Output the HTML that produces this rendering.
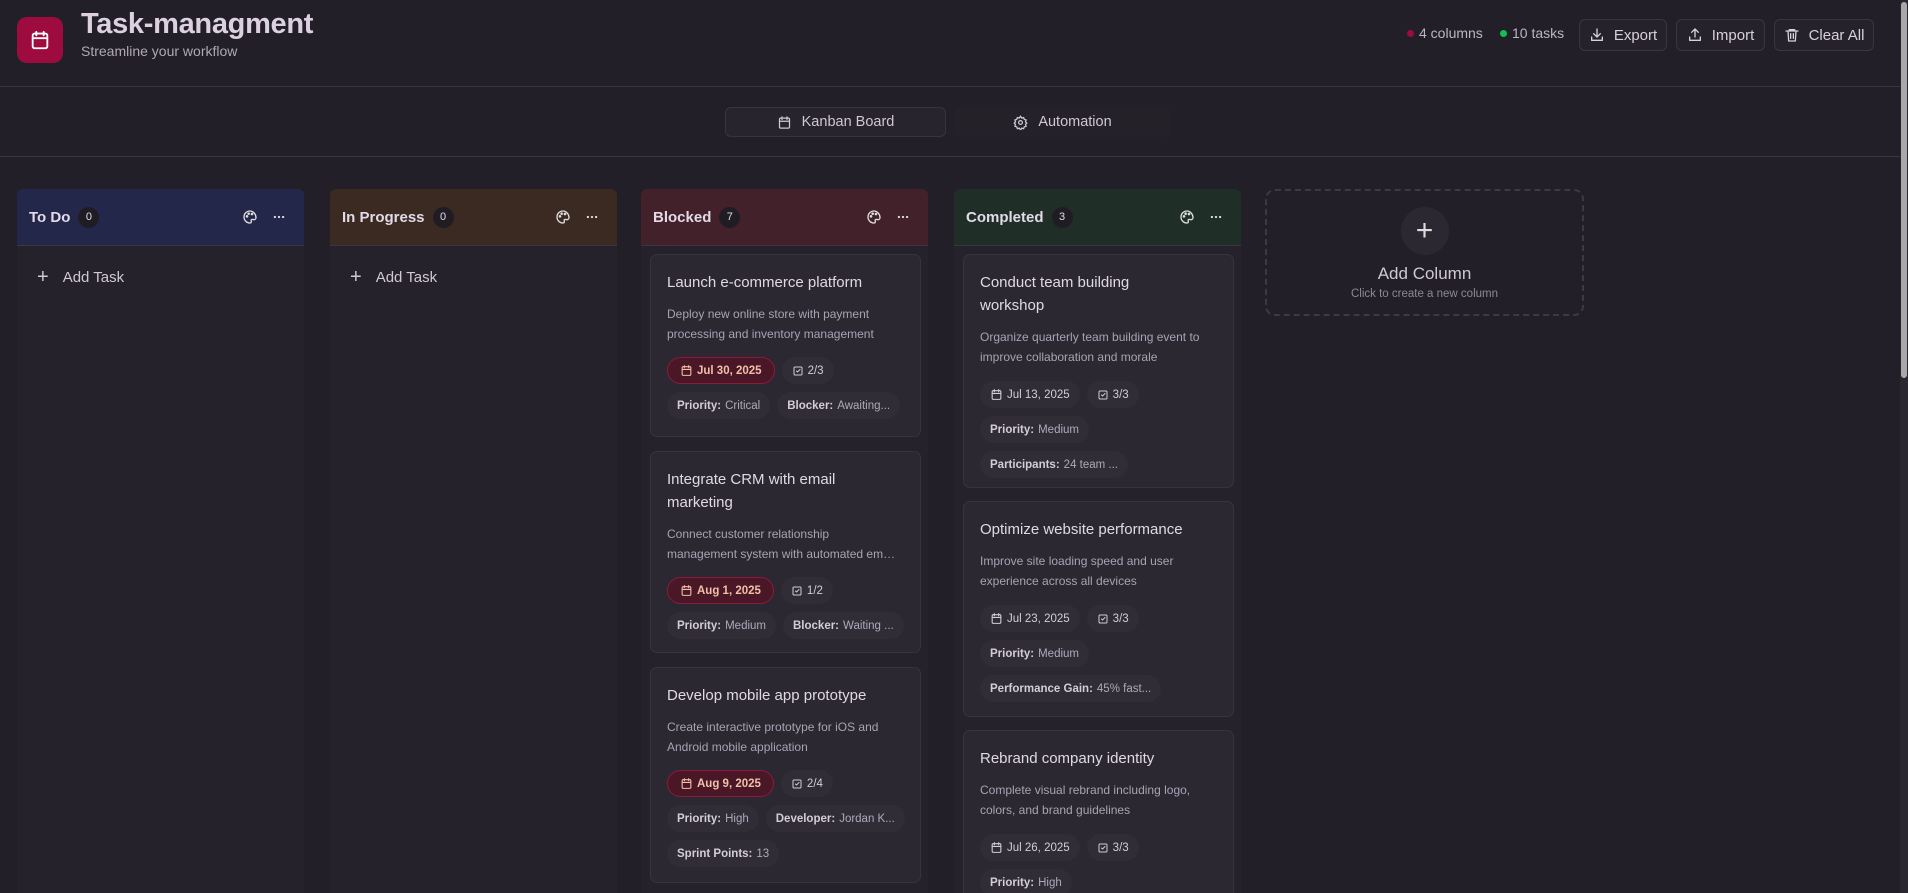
<!DOCTYPE html>
<html style="width:1908px;height:893px;overflow:hidden"><head><meta charset="utf-8">
<style>
*{box-sizing:border-box;margin:0;padding:0}
body{width:1908px;height:893px;overflow:hidden;background:#221f28;font-family:"Liberation Sans",sans-serif;color:#ddd5e3;position:relative}
.abs{position:absolute}
.hdr{left:0;top:0;width:1900px;height:87px;border-bottom:1px solid #3a3540}
.logo{left:17px;top:17px;width:46px;height:46px;border-radius:10px;background:#9e0b3e;display:flex;align-items:center;justify-content:center}
.title{left:81px;top:8px;font-size:29px;font-weight:bold;color:#ddd0e0;letter-spacing:-0.3px}
.sub{left:81px;top:43px;font-size:14px;color:#b0a8b8}
.stat{top:25px;font-size:14px;color:#bdb5c5;display:flex;align-items:center;gap:5px}
.dot{width:7px;height:7px;border-radius:50%}
.btn{top:19px;height:32px;border:1px solid #3a3640;border-radius:6px;background:#25222b;display:flex;align-items:center;justify-content:center;gap:9px;font-size:15px;color:#d8d0de}
.nav{left:0;top:87px;width:1900px;height:70px;border-bottom:1px solid #3a3540}
.tab{top:107px;height:30px;border-radius:6px;display:flex;align-items:center;justify-content:center;gap:10px;font-size:14.5px;color:#cfc7d6}
.col{top:189px;width:287px;height:704px;background:#25222b;border-radius:6px 6px 0 0;overflow:hidden}
.ch{height:57px;border-radius:6px 6px 0 0;border-bottom:1px solid #3a3540;display:flex;align-items:center;padding:0 12px;font-size:15px;font-weight:bold;color:#e2dae8}
.badge{width:21px;height:21px;border-radius:50%;background:#1f1c24;font-size:11px;font-weight:normal;display:flex;align-items:center;justify-content:center;margin-left:8px}
.ic{margin-left:auto;display:flex;gap:14px;align-items:center;margin-right:6px}
.add{display:flex;align-items:center;gap:14px;padding:20px 20px;font-size:15px;color:#d0c8d6}
.card{width:271px;background:#2b2832;border:1px solid #38343f;border-radius:7px;padding:16px;overflow:hidden}
.ct{font-size:15px;line-height:23px;color:#e0d8e6;margin-bottom:11px;white-space:nowrap}
.cd{font-size:12px;line-height:19.5px;color:#aaa2b4;white-space:nowrap}
.pills{display:flex;flex-direction:column;gap:8px;margin-top:13px}
.row{display:flex;gap:7px}
.pill{height:27px;border-radius:14px;background:#302d37;display:flex;align-items:center;gap:4px;padding:0 10px;font-size:11.5px;color:#d4ccda;white-space:nowrap}
.pill b{font-weight:bold}
.pill span{color:#b0a8ba}
.red{background:#4a1727;border:1px solid #8c1a3e;color:#f2c0a8;font-weight:bold;padding:0 12px}
.addcol{left:1265px;top:189px;width:319px;height:127px;border:2px dashed #3e3944;border-radius:10px;text-align:center}
.sb{left:1900px;top:0;width:8px;height:893px;background:#2a2730}
.thumb{left:1901px;top:2px;width:6px;height:376px;background:#a8a8a8;border-radius:3px}
</style></head><body>
<svg width="0" height="0" style="position:absolute"><defs>
<symbol id="cal" viewBox="0 0 24 24"><g fill="none" stroke="currentColor" stroke-width="2" stroke-linecap="round"><rect x="4" y="5" width="16" height="16" rx="2"/><path d="M8 3v4M16 3v4M4 10h16"/></g></symbol>
<symbol id="chk" viewBox="0 0 24 24"><g fill="none" stroke="currentColor" stroke-width="2" stroke-linecap="round" stroke-linejoin="round"><rect x="4" y="4" width="16" height="16" rx="2"/><path d="M9 12l2 2 5-5"/></g></symbol>
<symbol id="pal" viewBox="0 0 24 24"><g fill="none" stroke="currentColor" stroke-width="2"><path d="M12 3a9 9 0 100 18c1.5 0 2-1 2-2 0-1.5-1-2 0-3s3 0 4 0a3 3 0 003-3c0-5-4-10-9-10z"/><circle cx="7.5" cy="11" r="1"/><circle cx="10" cy="7" r="1"/><circle cx="15" cy="7.5" r="1"/></g></symbol>
<symbol id="dots" viewBox="0 0 24 24"><g fill="currentColor"><circle cx="5" cy="12" r="2"/><circle cx="12" cy="12" r="2"/><circle cx="19" cy="12" r="2"/></g></symbol>
</defs></svg>
<div class="abs hdr"></div>
<div class="abs logo"><svg width="22" height="22" style="color:#fff"><use href="#cal"/></svg></div>
<div class="abs title">Task-managment</div>
<div class="abs sub">Streamline your workflow</div>
<div class="abs stat" style="left:1407px"><div class="dot" style="background:#9e0b3e"></div>4 columns</div>
<div class="abs stat" style="left:1500px"><div class="dot" style="background:#10c050"></div>10 tasks</div>
<div class="abs btn" style="left:1579px;width:88px"><svg width="16" height="16" viewBox="0 0 24 24" fill="none" stroke="#d8d0de" stroke-width="2" stroke-linecap="round" stroke-linejoin="round"><path d="M12 3v12M7 10l5 5 5-5M4 15v5h16v-5"/></svg>Export</div>
<div class="abs btn" style="left:1676px;width:89px"><svg width="16" height="16" viewBox="0 0 24 24" fill="none" stroke="#d8d0de" stroke-width="2" stroke-linecap="round" stroke-linejoin="round"><path d="M12 15V3M7 8l5-5 5 5M4 15v5h16v-5"/></svg>Import</div>
<div class="abs btn" style="left:1774px;width:100px"><svg width="16" height="16" viewBox="0 0 24 24" fill="none" stroke="#d8d0de" stroke-width="2" stroke-linecap="round" stroke-linejoin="round"><path d="M3 6h18M8 6V4h8v2M6 6l1 15h10l1-15M10 10v7M14 10v7"/></svg>Clear All</div>
<div class="abs nav"></div>
<div class="abs tab" style="left:725px;width:221px;background:#27242d;border:1px solid #38343e"><svg width="15" height="15" style="color:#cfc7d6"><use href="#cal"/></svg>Kanban Board</div>
<div class="abs tab" style="left:955px;width:215px;background:#242129"><svg width="15" height="15" viewBox="0 0 24 24" fill="none" stroke="#cfc7d6" stroke-width="2"><circle cx="12" cy="12" r="3"/><path d="M12 2l2 3 3-1 1 3 3 1-1 3 2 2-2 2 1 3-3 1-1 3-3-1-2 3-2-3-3 1-1-3-3-1 1-3-2-2 2-2-1-3 3-1 1-3 3 1z"/></svg>Automation</div>

<div class="abs col" style="left:17px"><div class="ch" style="background:#23284a">To Do<div class="badge">0</div><div class="ic"><svg width="16" height="16" style="color:#ddd"><use href="#pal"/></svg><svg width="14" height="14" style="color:#ddd"><use href="#dots"/></svg></div></div><div class="add"><span style="font-size:20px;font-weight:300">+</span>Add Task</div></div>
<div class="abs col" style="left:330px"><div class="ch" style="background:#3b2a22">In Progress<div class="badge">0</div><div class="ic"><svg width="16" height="16" style="color:#ddd"><use href="#pal"/></svg><svg width="14" height="14" style="color:#ddd"><use href="#dots"/></svg></div></div><div class="add"><span style="font-size:20px;font-weight:300">+</span>Add Task</div></div>
<div class="abs col" style="left:641px"><div class="ch" style="background:#42212a">Blocked<div class="badge">7</div><div class="ic"><svg width="16" height="16" style="color:#ddd"><use href="#pal"/></svg><svg width="14" height="14" style="color:#ddd"><use href="#dots"/></svg></div></div></div>
<div class="abs col" style="left:954px"><div class="ch" style="background:#1f2f28">Completed<div class="badge">3</div><div class="ic"><svg width="16" height="16" style="color:#ddd"><use href="#pal"/></svg><svg width="14" height="14" style="color:#ddd"><use href="#dots"/></svg></div></div></div>

<div class="abs card" style="left:650px;top:254px;height:183px"><div class="ct">Launch e-commerce platform</div><div class="cd">Deploy new online store with payment<br>processing and inventory management</div>
<div class="pills"><div class="row"><div class="pill red"><svg width="13" height="13"><use href="#cal"/></svg>Jul 30, 2025</div><div class="pill"><svg width="12" height="12"><use href="#chk"/></svg>2/3</div></div><div class="row"><div class="pill"><b>Priority:</b><span>Critical</span></div><div class="pill"><b>Blocker:</b><span>Awaiting...</span></div></div></div></div>
<div class="abs card" style="left:650px;top:451px;height:202px"><div class="ct">Integrate CRM with email<br>marketing</div><div class="cd">Connect customer relationship<br>management system with automated em…</div>
<div class="pills"><div class="row"><div class="pill red"><svg width="13" height="13"><use href="#cal"/></svg>Aug 1, 2025</div><div class="pill"><svg width="12" height="12"><use href="#chk"/></svg>1/2</div></div><div class="row"><div class="pill"><b>Priority:</b><span>Medium</span></div><div class="pill"><b>Blocker:</b><span>Waiting ...</span></div></div></div></div>
<div class="abs card" style="left:650px;top:667px;height:216px"><div class="ct">Develop mobile app prototype</div><div class="cd">Create interactive prototype for iOS and<br>Android mobile application</div>
<div class="pills"><div class="row"><div class="pill red"><svg width="13" height="13"><use href="#cal"/></svg>Aug 9, 2025</div><div class="pill"><svg width="12" height="12"><use href="#chk"/></svg>2/4</div></div><div class="row"><div class="pill"><b>Priority:</b><span>High</span></div><div class="pill"><b>Developer:</b><span>Jordan K...</span></div></div><div class="row"><div class="pill"><b>Sprint Points:</b><span>13</span></div></div></div></div>

<div class="abs card" style="left:963px;top:254px;height:234px"><div class="ct">Conduct team building<br>workshop</div><div class="cd">Organize quarterly team building event to<br>improve collaboration and morale</div>
<div class="pills" style="margin-top:14px"><div class="row"><div class="pill"><svg width="13" height="13"><use href="#cal"/></svg>Jul 13, 2025</div><div class="pill"><svg width="12" height="12"><use href="#chk"/></svg>3/3</div></div><div class="row"><div class="pill"><b>Priority:</b><span>Medium</span></div></div><div class="row"><div class="pill"><b>Participants:</b><span>24 team ...</span></div></div></div></div>
<div class="abs card" style="left:963px;top:501px;height:216px"><div class="ct">Optimize website performance</div><div class="cd">Improve site loading speed and user<br>experience across all devices</div>
<div class="pills" style="margin-top:14px"><div class="row"><div class="pill"><svg width="13" height="13"><use href="#cal"/></svg>Jul 23, 2025</div><div class="pill"><svg width="12" height="12"><use href="#chk"/></svg>3/3</div></div><div class="row"><div class="pill"><b>Priority:</b><span>Medium</span></div></div><div class="row"><div class="pill"><b>Performance Gain:</b><span>45% fast...</span></div></div></div></div>
<div class="abs card" style="left:963px;top:730px;height:200px"><div class="ct">Rebrand company identity</div><div class="cd">Complete visual rebrand including logo,<br>colors, and brand guidelines</div>
<div class="pills" style="margin-top:14px"><div class="row"><div class="pill"><svg width="13" height="13"><use href="#cal"/></svg>Jul 26, 2025</div><div class="pill"><svg width="12" height="12"><use href="#chk"/></svg>3/3</div></div><div class="row"><div class="pill"><b>Priority:</b><span>High</span></div></div></div></div>

<div class="abs addcol"><div style="width:48px;height:48px;border-radius:50%;background:#2b2832;margin:16px auto 0;display:flex;align-items:center;justify-content:center;font-size:30px;font-weight:300;color:#ddd">+</div>
<div style="font-size:17px;color:#d0c8d8;margin-top:9px">Add Column</div><div style="font-size:11.5px;color:#8e879a;margin-top:4px">Click to create a new column</div></div>
<div class="abs sb"></div><div class="abs thumb"></div>
</body></html>
